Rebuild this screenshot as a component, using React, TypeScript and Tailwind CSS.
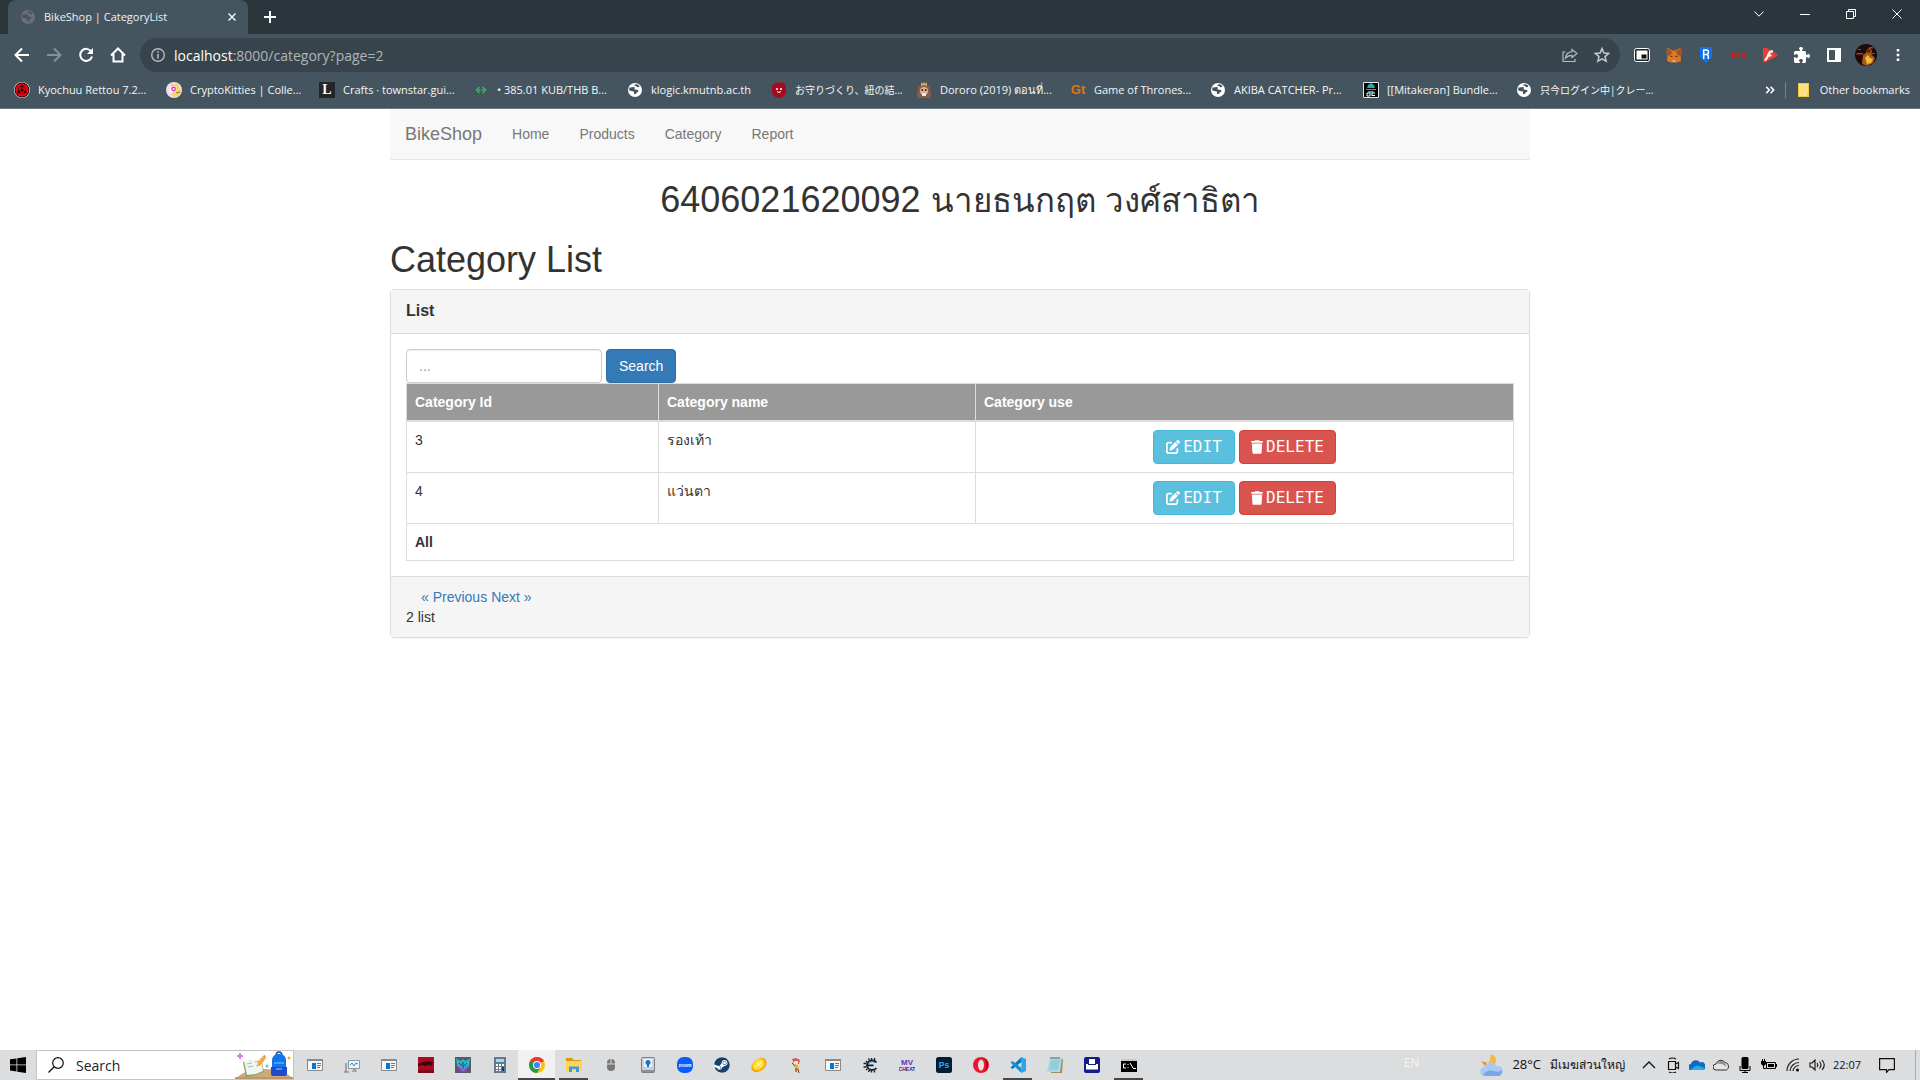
import React from "react";
import { FaPenToSquare, FaTrash, FaSteam, FaPuzzlePiece } from "react-icons/fa6";

type IconProps = { children: React.ReactNode; size?: string; box?: string };

function Svg({ children, size = "size-4", box = "0 0 16 16" }: IconProps) {
  return (
    <svg viewBox={box} className={`${size} block shrink-0`} fill="none" aria-hidden="true">
      {children}
    </svg>
  );
}

/* ---------- bookmark icons ---------- */

function Globe({ dark = false }: { dark?: boolean }) {
  const disc = dark ? "#6b6f73" : "#ffffff";
  const land = dark ? "#45555f" : "#43545e";
  return (
    <Svg>
      <circle cx="8" cy="8" r="7" fill={disc} />
      <path
        d="M2.600 5.200C3.800 6.400 6 4.500 7.500 5.200c1 .6-.6 1.600.4 2.200 1 .5 3-.2 3.500 1.200.4 1.400-1.600 1.400-2.200 2.600-.6 1-1.700 1.500-2.200.6-.4-.8.6-1.600-.3-2.200C5.500 8.800 3 9.600 2.100 8zM8.500 2.300c-.8.800-1.500.6-1.200 1.300.4.7 1.600.2 2.200.8.5.6 1.100.9 2.100.7l1-.9c-1-1.300-2.500-1.900-4.100-1.900z"
        fill={land}
      />
    </Svg>
  );
}

const Sharingan = () => (
  <Svg>
    <circle cx="8" cy="8" r="8" fill="#e9e2e2" />
    <circle cx="8" cy="8" r="7.400" fill="#160000" />
    <circle cx="8" cy="8" r="6.600" fill="#f0040f" />
    <circle cx="8" cy="8" r="3.800" stroke="#7a0000" />
    <circle cx="8" cy="8" r="1.700" fill="#160000" />
    <circle cx="8" cy="4.200" r="1.400" fill="#160000" />
    <circle cx="4.700" cy="10" r="1.400" fill="#160000" />
    <circle cx="11.300" cy="10" r="1.400" fill="#160000" />
  </Svg>
);
const Kitty = () => (
  <Svg>
    <circle cx="8" cy="8" r="8" fill="#f3dcf3" />
    <path d="M5 1l3 1.500L12 1l1.500 5 2.500 2-2 5-5 2.500-3-2-2-5z" fill="#f4d674" />
    <path d="M4 5l5-1 1 4-4 3-3-2z" fill="#fff" />
    <circle cx="7.500" cy="7" r="2.400" fill="#e936c9" />
    <circle cx="7.500" cy="7" r="1" fill="#fff" />
    <path d="M10 11l4-1" stroke="#8f6d28" />
  </Svg>
);
const LetterL = () => (
  <span className="flex size-4 shrink-0 items-center justify-center bg-[#22252a] font-['Liberation_Serif',serif] text-[14px] leading-4 font-bold text-white">
    L
  </span>
);
const Bitkub = () => (
  <Svg>
    <path d="M6.500 5L3.500 8l3 3M6.500 7v2M9.500 5l3 3-3 3M9.500 7v2" stroke="#3fb567" strokeWidth="1.500" />
  </Svg>
);
const Mask = () => (
  <Svg>
    <path d="M1 3l3-1 1-2 3 1 4-1 1 2 2 1v6c0 4-3 7-7 7s-7-3-7-7z" fill="#a50a1d" />
    <circle cx="6" cy="7" r="1.100" fill="#fff" />
    <circle cx="10" cy="7" r="1.100" fill="#fff" />
    <path d="M6 9.500q2 2 4 0" stroke="#fff" />
  </Svg>
);
const Bear = () => (
  <Svg>
    <path d="M5 0l1.500 2L8 0l1.500 2L11 0v4H5z" fill="#d9b26a" />
    <path d="M2 4h3l3-1 3 1h3v4l1 4-1 4H2l-1-4 1-4z" fill="#8a5a44" />
    <circle cx="8" cy="9" r="4" fill="#d8b39a" />
    <circle cx="6.300" cy="8" r=".9" fill="#2c1a12" />
    <circle cx="9.700" cy="8" r=".9" fill="#2c1a12" />
    <path d="M6 11h4v3H6z" fill="#f3e6db" />
  </Svg>
);
const Gt = () => (
  <span className="flex size-4 shrink-0 items-center justify-center font-['Liberation_Sans',sans-serif] text-[13px] leading-4 font-bold text-[#e8710a]">
    Gt
  </span>
);
const Pirate = () => (
  <Svg>
    <path d="M0 0h16v16H0z" fill="#050505" />
    <path d="M.5.500h15v15H.500z" stroke="#dfe7e8" />
    <path d="M5 3l3-2 3 2 1 3H4zM3 7h10v1H3zM5 9h6l-1 2H6z" fill="#2ea7b3" />
    <path d="M4 11h3v3H4zM9 11h3M9 13.500h3M9 11v3" stroke="#fff" />
  </Svg>
);
const Folder = () => (
  <Svg>
    <path d="M2 1h11v10l-1 4H2z" fill="#ffe082" />
    <path d="M2.500 1.500h10v9M2.500 1.500v13H11" stroke="#efc83d" />
    <path d="M11 11h2v4h-2z" fill="#f5cf4a" />
  </Svg>
);

const bookmarks = [
  { label: "Kyochuu Rettou 7.2...", icon: <Sharingan />, width: "w-[152px]" },
  { label: "CryptoKitties | Colle...", icon: <Kitty />, width: "w-[153px]" },
  { label: "Crafts · townstar.gui...", icon: <LetterL />, width: "w-[154px]" },
  { label: "• 385.01 KUB/THB B...", icon: <Bitkub />, width: "w-[154px]" },
  { label: "klogic.kmutnb.ac.th", icon: <Globe />, width: "w-[144px]" },
  { label: "お守りづくり、紐の結...", icon: <Mask />, width: "w-[145px] text-[10px]" },
  { label: "Dororo (2019) ตอนที่...", icon: <Bear />, width: "w-[154px]" },
  { label: "Game of Thrones...", icon: <Gt />, width: "w-[140px]" },
  { label: "AKIBA CATCHER- Pr...", icon: <Globe />, width: "w-[153px]" },
  { label: "[[Mitakeran] Bundle...", icon: <Pirate />, width: "w-[153px]" },
  { label: "只今ログイン中|クレー...", icon: <Globe />, width: "w-[153px] text-[10px]" },
];

/* ---------- browser window ---------- */

const windowControls = [
  { name: "Search tabs", d: "M3.500 5.500L8 10.200l4.500-4.700" },
  { name: "Minimize", d: "M3 8.500h10" },
  { name: "Restore", d: "M3.500 5.500h7v7h-7zM5.500 5.500v-2h7v7h-2" },
  { name: "Close", d: "M3.500 3.500l9 9M12.500 3.500l-9 9" },
];

function TabStrip() {
  return (
    <div className="flex h-[34px] items-center bg-[#2b363c]">
      <div className="ml-2 flex h-full w-60 items-center rounded-t-lg bg-[#45555f] pr-2 pl-3">
        <Globe dark />
        <span className="ml-2 flex-1 text-[11px] whitespace-nowrap text-[#eef1f2]">BikeShop | CategoryList</span>
        <button aria-label="Close tab" className="text-[#eef1f2]">
          <Svg>
            <path d="M4.500 4.500l7 7M11.500 4.500l-7 7" stroke="currentColor" strokeWidth="1.500" />
          </Svg>
        </button>
      </div>
      <button aria-label="New tab" className="ml-3.5 text-white">
        <Svg>
          <path d="M8 2v12M2 8h12" stroke="currentColor" strokeWidth="2" />
        </Svg>
      </button>
      <div className="ml-auto flex h-7 self-start">
        {windowControls.map((c) => (
          <button key={c.name} aria-label={c.name} className="flex w-[46px] items-center justify-center text-white">
            <Svg>
              <path d={c.d} stroke="currentColor" />
            </Svg>
          </button>
        ))}
      </div>
    </div>
  );
}

const navButtons = [
  { name: "Back", tone: "text-white", art: <path d="M15 8H2M8 1.500L1.500 8 8 14.500" stroke="currentColor" strokeWidth="2" /> },
  { name: "Forward", tone: "text-[#84919a]", art: <path d="M1 8h13M8 1.500L14.500 8 8 14.500" stroke="currentColor" strokeWidth="2" /> },
  {
    name: "Reload",
    tone: "text-white",
    art: (
      <>
        <path d="M13.200 4.500A6 6 0 1 0 14 9.500" stroke="currentColor" strokeWidth="2" />
        <path d="M15 1v6H9z" fill="currentColor" />
      </>
    ),
  },
  { name: "Home", tone: "text-white", art: <path d="M1 8.500L8 1.500l7 7M3.500 7v7.500h9V7" stroke="currentColor" strokeWidth="2" /> },
];

const extensions = [
  {
    name: "Picture in picture",
    art: (
      <>
        <rect x=".5" y="1.500" width="15" height="13" rx="2" fill="#1d2226" stroke="#fff" strokeWidth="1" />
        <path d="M2.500 3.500h11v9h-11z" fill="#fff" />
        <path d="M7.500 7.500h5v4h-5z" fill="#111" />
      </>
    ),
  },
  {
    name: "MetaMask",
    art: (
      <>
        <path d="M1 .500l5.500 3h3l5.500-3 .5 5-.8 4.500.3 4-3.800 1.500H4.800L1 14l.4-4-.9-4.500z" fill="#e2761b" />
        <path d="M1 1l5 3.500L4.500 8 1 9zM15 1l-5 3.500L11.500 8 15 9z" fill="#a65321" />
        <path d="M5 8.500l2 1.500H4.500zM11 8.500L9 10h2.500z" fill="#233447" />
        <path d="M6 13h4l-.5 2h-3z" fill="#c0ad9e" />
      </>
    ),
  },
  {
    name: "Ronin",
    art: (
      <>
        <path d="M2 1.500Q2 0 3.500 0h9Q14 0 14 1.500v9L8 16l-6-5.500z" fill="#1273ea" />
        <path d="M5.700 12V3h3.600l1 1v2.500l-1 1H5.700M9 7.500l1.300 1.500V12" stroke="#fff" strokeWidth="1.500" />
      </>
    ),
  },
  {
    name: "STR",
    art: <path d="M5 6.500H1.500V8H4.500V10H1M6 6.500h4M8 6v4.500M11.500 10.500v-4h3V8.500h-3M13.500 8.500l1.500 2" stroke="#e8170c" strokeWidth="1.400" />,
  },
  {
    name: "Flash player",
    art: (
      <>
        <path d="M2 .500Q1 .500 1 2v12q0 2 2 1.500L15 9q1-.8 0-2L5 1z" fill="#ef3b33" />
        <path d="M11 4.500Q7.500 4 6.500 7.500T3 13.500M5.500 8.500h4" stroke="#fff" strokeWidth="2.200" />
      </>
    ),
  },
];

function Toolbar() {
  return (
    <div className="flex h-[38px] items-center pt-1 pr-3.5 pl-3.5">
      <div className="flex gap-4">
        {navButtons.map((b) => (
          <button key={b.name} aria-label={b.name} className={b.tone}>
            <Svg>{b.art}</Svg>
          </button>
        ))}
      </div>
      <div className="ml-3.5 flex h-[34px] flex-1 items-center rounded-full bg-[#38444b] px-2.5">
        <Svg>
          <circle cx="8" cy="8" r="6.300" stroke="#b4bbc0" strokeWidth="1.400" />
          <path d="M8 7v4.500M8 4.200v1.600" stroke="#b4bbc0" strokeWidth="1.600" />
        </Svg>
        <a href="#" className="ml-2 flex-1 text-[14px] text-[#aeb6ba]">
          <span className="text-white">localhost</span>:8000/category?page=2
        </a>
        <button aria-label="Share" className="mr-4 text-[#b4bbc0]">
          <Svg>
            <path d="M3.500 5H1v9.500h12V12M10 2.500l5 4-5 4V8.300c-3 0-5 .9-6.500 2.800C4 7.500 6.500 5 10 4.700z" stroke="currentColor" strokeWidth="1.200" />
          </Svg>
        </button>
        <button aria-label="Bookmark this page" className="text-[#c3c9cd]">
          <Svg>
            <path d="M8 1.500l1.900 4.500 4.800.4-3.700 3.200 1.200 4.700L8 11.800l-4.200 2.500L5 9.600 1.300 6.400 6.100 6z" stroke="currentColor" strokeWidth="1.500" />
          </Svg>
        </button>
      </div>
      <div className="ml-3.5 flex items-center gap-4">
        {extensions.map((e) => (
          <button key={e.name} aria-label={e.name}>
            <Svg>{e.art}</Svg>
          </button>
        ))}
        <button aria-label="Extensions" className="text-white">
          <FaPuzzlePiece className="size-4" />
        </button>
        <button aria-label="Side panel">
          <Svg>
            <path d="M2 2h12v12H2z" stroke="#fff" strokeWidth="2" />
            <path d="M9 1h6v14H9z" fill="#fff" />
          </Svg>
        </button>
        <button aria-label="Profile" className="-mx-[3px]">
          <Svg size="size-[22px]" box="0 0 22 22">
            <circle cx="11" cy="11" r="11" fill="#1c0b0a" />
            <path d="M2 9h6v1.500H1zM3 5h3v1H3zM14 3h4v1.500h-4zM15 9h5v1h-5z" fill="#d3263d" />
            <path d="M8 11l3-2 1-4 3-1 2 3-1 3 4 4-2 5-6 3-5-2z" fill="#a85c1a" />
            <path d="M10 14l3-3 2 3 3 1-2 4-4 1z" fill="#edbb32" />
            <circle cx="13.500" cy="7" r="2" fill="#5b2413" />
          </Svg>
        </button>
        <button aria-label="Menu">
          <Svg>
            <path d="M6.700 2h2.600v2.600H6.700zM6.700 6.700h2.600v2.600H6.700zM6.700 11.400h2.600V14H6.700z" fill="#fff" />
          </Svg>
        </button>
      </div>
    </div>
  );
}

function BookmarkBar() {
  return (
    <div className="flex h-9 items-center pr-2.5 pl-3.5 text-[11px] text-[#f4f6f7]">
      <nav aria-label="Bookmarks" className="flex min-w-0 flex-1 overflow-hidden">
        {bookmarks.map((b) => (
          <a key={b.label} href="#" className={`flex shrink-0 items-center gap-2 whitespace-nowrap ${b.width}`}>
            {b.icon}
            {b.label}
          </a>
        ))}
      </nav>
      <button aria-label="More bookmarks" className="mr-2.5">
        <Svg size="size-2.5">
          <path d="M2 3l5 5-5 5M9 3l5 5-5 5" stroke="#fff" strokeWidth="2.400" />
        </Svg>
      </button>
      <div className="h-4 w-px bg-[#74838c]" />
      <button className="ml-2.5 flex items-center gap-2 whitespace-nowrap">
        <Folder />
        Other bookmarks
      </button>
    </div>
  );
}

/* ---------- page ---------- */

const rows = [
  { id: 3, name: "รองเท้า" },
  { id: 4, name: "แว่นตา" },
];

const cell = "border border-[#ddd] p-2 align-top";

function CategoryPage() {
  return (
    <main className="flex-1 bg-white font-['Liberation_Sans','Open_Sans','Noto_Sans_CJK_JP',sans-serif] text-[14px] leading-5 text-[#333]">
      <div className="mx-auto max-w-[1140px]">
        <nav className="flex h-[51px] items-center border-b border-[#e7e7e7] bg-[#f8f8f8] text-[#777]">
          <a href="#" className="px-[15px] text-[18px]">BikeShop</a>
          <a href="#" className="px-[15px]">Home</a>
          <a href="#" className="px-[15px]">Products</a>
          <a href="#" className="px-[15px]">Category</a>
          <a href="#" className="px-[15px]">Report</a>
        </nav>
        <h1 className="mt-5 text-center text-[36px] leading-10">
          6406021620092 <span className="text-[33px] leading-none">นายธนกฤต วงศ์สาธิตา</span>
        </h1>
        <h1 className="mt-5 mb-[9px] text-[36px] leading-10">Category List</h1>
        <section className="rounded-[4px] border border-[#ddd] shadow-[0_1px_1px_rgba(0,0,0,0.05)]">
          <div className="border-b border-[#ddd] bg-[#f5f5f5] px-[15px] pt-[11px] pb-3">
            <h2 className="text-[16px] leading-5 font-bold">List</h2>
          </div>
          <div className="p-[15px]">
            <form className="flex gap-1" onSubmit={(e) => e.preventDefault()}>
              <input
                type="text"
                aria-label="Search categories"
                placeholder="..."
                className="h-[34px] w-[196px] rounded-[4px] border border-[#ccc] px-3 shadow-[inset_0_1px_1px_rgba(0,0,0,0.075)] placeholder:text-[#999]"
              />
              <button className="h-[34px] rounded-[4px] border border-[#2e6da4] bg-[#337ab7] px-3 text-white">Search</button>
            </form>
            <table className="w-full table-fixed border-collapse border border-[#ddd]">
              <colgroup>
                <col className="w-[252px]" />
                <col className="w-[317px]" />
                <col />
              </colgroup>
              <thead>
                <tr className="bg-[#999] text-left text-white">
                  <th className="border border-b-2 border-[#ddd] p-2">Category Id</th>
                  <th className="border border-b-2 border-[#ddd] p-2">Category name</th>
                  <th className="border border-b-2 border-[#ddd] p-2">Category use</th>
                </tr>
              </thead>
              <tbody>
                {rows.map((r) => (
                  <tr key={r.id}>
                    <td className={cell}>{r.id}</td>
                    <td className={cell}>{r.name}</td>
                    <td className={cell}>
                      <div className="flex justify-center gap-1 font-['DejaVu_Sans_Mono',monospace] text-[16px] text-white">
                        <button className="flex h-[34px] w-[82px] items-center justify-center gap-[3px] rounded-[4px] border border-[#46b8da] bg-[#5bc0de]">
                          <FaPenToSquare className="size-3.5 shrink-0" />
                          EDIT
                        </button>
                        <button className="flex h-[34px] w-[97px] items-center justify-center gap-[3px] rounded-[4px] border border-[#d43f3a] bg-[#d9534f]">
                          <FaTrash className="h-3.5 w-3 shrink-0" />
                          DELETE
                        </button>
                      </div>
                    </td>
                  </tr>
                ))}
              </tbody>
              <tfoot>
                <tr>
                  <th colSpan={3} className="border border-[#ddd] p-2 text-left">All</th>
                </tr>
              </tfoot>
            </table>
          </div>
          <div className="border-t border-[#ddd] bg-[#f5f5f5] px-[15px] py-2.5">
            <nav aria-label="Pages" className="flex gap-1 pl-[15px] text-[#337ab7]">
              <a href="#">« Previous</a>
              <a href="#">Next »</a>
            </nav>
            <p>2 list</p>
          </div>
        </section>
      </div>
    </main>
  );
}

/* ---------- taskbar ---------- */

const newsWindow = (
  <>
    <path d="M.5 2.500h15v11H.500z" fill="#f7f7f7" stroke="#8a8a8a" />
    <path d="M0 2h16v2H0z" fill="#8a8a8a" />
    <path d="M5 6h4v6H5z" fill="#0078d7" />
    <path d="M10 6.500h4M10 8.500h4M10 10.500h3" stroke="#777" />
  </>
);

const apps: { name: string; art: React.ReactNode; state?: "active" | "open" }[] = [
  { name: "Media window", art: newsWindow },
  {
    name: "System monitor",
    art: (
      <>
        <path d="M4.500 3.500h11v8h-11z" fill="#e9f6fb" stroke="#8d979c" />
        <path d="M6 8l2-2 2 3 2-3 2 1" stroke="#2d8fc4" />
        <path d="M9 12h3l1 3H8zM1 6h2v9H1z" fill="#9da5a8" />
        <path d="M0 15h5" stroke="#777" />
      </>
    ),
  },
  { name: "Media window 2", art: newsWindow },
  {
    name: "Red game",
    art: (
      <>
        <path d="M0 0h16v16H0z" fill="#b3061f" />
        <path d="M0 7l5-2 7-1 4 2-3 1 2 2-5-1-3 1-2-1-5 1z" fill="#35070f" />
        <path d="M0 13h16v3H0z" fill="#7c0a1b" />
      </>
    ),
  },
  {
    name: "Predator",
    art: (
      <>
        <path d="M0 0h16v16H0z" fill="#565a63" />
        <path d="M1 1l4 3 3-2 3 2 4-3-1 8-6 6-6-6z" fill="#27b7cf" />
        <path d="M3 8l5 6 5-6-1 5-4 3-4-3z" fill="#b42ee6" />
        <path d="M4 6l3 3M12 6L9 9M8 5v7" stroke="#343848" />
      </>
    ),
  },
  {
    name: "Calculator",
    art: (
      <>
        <path d="M2 0h12v16H2z" fill="#67798a" />
        <path d="M4 2h8v3H4z" fill="#8fe0ff" />
        <path d="M4 7h2v2H4zM7 7h2v2H7zM4 10h2v2H4zM7 10h2v2H7zM4 13h2v1H4zM7 13h2v1H7zM10 7h2v2h-2z" fill="#fff" />
        <path d="M10 10h2v4h-2z" fill="#0b3f80" />
      </>
    ),
  },
  {
    name: "Chrome",
    state: "active",
    art: (
      <>
        <circle cx="8" cy="8" r="8" fill="#fbc116" />
        <path d="M8 8L1.070 4A8 8 0 0 1 14.930 4z" fill="#e33b2e" />
        <path d="M1.070 4A8 8 0 0 0 8 16l3.500-6L8 8z" fill="#279847" />
        <circle cx="8" cy="8" r="4" fill="#fff" />
        <circle cx="8" cy="8" r="3.100" fill="#4285f4" />
      </>
    ),
  },
  {
    name: "File Explorer",
    state: "open",
    art: (
      <>
        <path d="M0 1h6l1.500 2H15v3H0z" fill="#d79a13" />
        <path d="M0 4h16v10H0z" fill="#ffd45e" />
        <path d="M3 15V9.500h10V15h-3v-3H6v3z" fill="#3b9be0" />
      </>
    ),
  },
  {
    name: "Mouse",
    art: (
      <>
        <rect x="4" y="2" width="8" height="12" rx="4" fill="#777" />
        <path d="M4 7h8M8 2v5" stroke="#dadada" />
      </>
    ),
  },
  {
    name: "Disk tool",
    art: (
      <>
        <rect x="1.500" y=".5" width="13" height="15" rx="1" fill="#ccd0d4" stroke="#7c8288" />
        <path d="M4 2h8v8H4z" fill="#eef4f8" />
        <circle cx="8" cy="5.500" r="2.500" fill="#1672c9" />
        <path d="M7 7h2v3H7z" fill="#1672c9" />
        <path d="M2 13h12v2H2z" fill="#8b9198" />
      </>
    ),
  },
  {
    name: "Zoom",
    art: (
      <>
        <rect width="16" height="16" rx="6.500" fill="#0b5cff" />
        <text x="8" y="9.700" textAnchor="middle" fontSize="5" fontWeight="700" fill="#fff">zoom</text>
      </>
    ),
  },
  {
    name: "Steam",
    art: (
      <>
        <circle cx="8" cy="8" r="8" fill="#fff" />
        <FaSteam size={16} color="#14406b" />
      </>
    ),
  },
  {
    name: "Lemon",
    art: (
      <>
        <ellipse cx="8" cy="8" rx="8.500" ry="6" transform="rotate(-40 8 8)" fill="#f8a900" />
        <ellipse cx="7.500" cy="7.500" rx="6.500" ry="4.800" transform="rotate(-40 7.500 7.500)" fill="#ffdc33" />
        <path d="M4 10l7-5M6 5l4 5M9 4l2 4" stroke="#fff9b8" />
      </>
    ),
  },
  {
    name: "Ragnarok",
    art: (
      <>
        <path d="M4 2l4-1 4 2-1 4H6z" fill="#d9556a" />
        <path d="M6 4h4v3H6z" fill="#f9dfc5" />
        <path d="M6 7l4 1 1 4-3 3-1-4z" fill="#e8b22c" />
        <path d="M4 6l3 3M10 12l1 4M8 11v4" stroke="#6f3b35" />
      </>
    ),
  },
  { name: "Media window 3", art: newsWindow },
  {
    name: "Cheat Engine",
    art: (
      <>
        <path d="M14.500 5.500Q13 3.500 10 3.500A4.700 4.700 0 0 0 10 13q3 0 4.500-2M4 8.300h7.500" stroke="#142028" strokeWidth="1.800" />
        <path d="M9.500 1v2M12.500 1v2M6.500 1.500l1 2M4 4l1.500 1.500M1.500 6.500h3M1.500 10h3M4 13l1.500-1.500M6.500 15l1-2M9.500 13.500v2M12.500 13.500v2" stroke="#142028" strokeWidth="1.400" />
        <path d="M13 5.500Q12 4.800 10 4.800T6.500 7.200" stroke="#2d9cc9" strokeWidth=".8" />
      </>
    ),
  },
  {
    name: "MV Cheat",
    art: (
      <>
        <text x="8" y="8" textAnchor="middle" fontSize="8" fontWeight="900" fill="#5f30b5">MV</text>
        <text x="8" y="14" textAnchor="middle" fontSize="5" fontWeight="900" fill="#40227e">CHEAT</text>
      </>
    ),
  },
  {
    name: "Photoshop",
    art: (
      <>
        <rect width="16" height="16" rx="2.500" fill="#001e36" />
        <text x="8" y="11" textAnchor="middle" fontSize="8.500" fontWeight="700" fill="#31a8ff">Ps</text>
      </>
    ),
  },
  {
    name: "Opera",
    art: (
      <>
        <circle cx="8" cy="8" r="8" fill="#f0142f" />
        <path d="M11 1a8 8 0 0 1 0 14c3-3 3-11 0-14z" fill="#a80018" />
        <ellipse cx="8" cy="8" rx="3" ry="5.500" fill="#e3e3e3" />
      </>
    ),
  },
  {
    name: "Visual Studio Code",
    state: "open",
    art: (
      <>
        <path d="M11.500 0L16 2v12l-4.500 2z" fill="#29a5f0" />
        <path d="M11.500 0v5L2.500 12 .5 10.500z" fill="#0879bf" />
        <path d="M11.500 16v-5L2.500 4 .5 5.500z" fill="#168fd6" />
      </>
    ),
  },
  {
    name: "Notepad",
    art: (
      <>
        <path d="M4 2h12l-1 14H4z" fill="#a58b58" />
        <path d="M3 1h12l-2 14H0z" fill="#a9dbe4" />
        <path d="M4 4h9M3.500 6h9M3 8h9M2.500 10h9M2 12h9" stroke="#6db1c0" strokeWidth=".7" />
        <path d="M4 0v2M6 0v2M8 0v2M10 0v2M12 0v2" stroke="#576468" />
      </>
    ),
  },
  {
    name: "Printer",
    art: (
      <>
        <rect width="16" height="16" rx="2" fill="#131c8c" />
        <path d="M5 2h6v5h3v6H2V7h3z" fill="#fff" />
        <path d="M4 7.500h8" stroke="#131c8c" />
        <path d="M2 12.500h12" stroke="#8590dd" />
      </>
    ),
  },
  {
    name: "Command Prompt",
    state: "open",
    art: (
      <>
        <path d="M0 2h16v13H0z" fill="#000" />
        <path d="M0 2h16v2H0z" fill="#c5c9cc" />
        <path d="M5 7H2.500v4H5M7 7v1M7 10v1M9 6l3 5M12 11.500h3" stroke="#fff" />
      </>
    ),
  },
];

const tray = [
  { name: "Show hidden icons", art: <path d="M2 11l6-6 6 6" stroke="#111" strokeWidth="1.300" /> },
  {
    name: "Meet now",
    art: <path d="M3.500 4.500h7v8h-7zM10.500 7l3-1.500v6l-3-1.500M4 2q3.500-2 7 0M4 15q3.500 2 7 0" stroke="#111" strokeWidth="1.200" />,
  },
  {
    name: "OneDrive",
    art: (
      <>
        <path d="M2 13a3 3 0 0 1 0-6 5 5 0 0 1 9-1.500A4 4 0 0 1 14 13z" fill="#0f6cbd" />
        <path d="M2 13q0-2 6-4.500L15.500 11q0 2-2 2z" fill="#29a8ea" />
      </>
    ),
  },
  {
    name: "OneDrive personal",
    art: (
      <>
        <path d="M3 13a3 3 0 0 1 0-6 5 5 0 0 1 9-1.500A4 4 0 0 1 13.500 13z" fill="#e4e4e4" stroke="#333" />
        <path d="M4 6.500Q8 2 11.500 6L14 10 9 7z" fill="#8d8d8d" />
      </>
    ),
  },
  {
    name: "Microphone",
    art: (
      <>
        <rect x="4.500" y="0" width="7" height="12" rx="1.500" fill="#000" />
        <path d="M3 9v4.500h10V9M8 13v3M5 15.500h6" stroke="#000" />
      </>
    ),
  },
  {
    name: "Battery",
    art: (
      <>
        <path d="M5.500 5.500h9v6h-9z" stroke="#000" />
        <path d="M7 7h6v3H7zM15 7h1v3h-1zM0 4h5v3L3.500 8.500h-2L0 7z" fill="#000" />
        <path d="M1.500 2v2M3.500 2v2M2.500 8v3.500H5" stroke="#000" />
      </>
    ),
  },
  {
    name: "Wi-Fi",
    art: (
      <>
        <path d="M2 14A12 12 0 0 1 14 2M5 14A9 9 0 0 1 14 5.500M8 14a6 6 0 0 1 6-5.500" stroke="#222" strokeWidth="1.200" />
        <circle cx="12.500" cy="13" r="1.500" fill="#000" />
      </>
    ),
  },
  {
    name: "Volume",
    art: <path d="M1 6h2l3-3v10l-3-3H1zM8 6q1.500 2 0 4M10.500 4.500q3 3.500 0 7M13 3q4.500 5 0 10" stroke="#111" strokeWidth="1.100" />,
  },
];

function Taskbar() {
  return (
    <footer className="flex h-[30px] items-center bg-[#dcdddf] text-[#111]">
      <button aria-label="Start" className="flex w-9 shrink-0 justify-center">
        <Svg>
          <path d="M0 2.300L6.500 1.400v6.100H0zM7.300 1.300L16 0v7.500H7.300zM0 8.300h6.500v6.200L0 13.600zM7.300 8.300H16V16l-8.700-1.200z" fill="#000" />
        </Svg>
      </button>
      <label className="flex h-full w-[258px] shrink-0 items-center border border-[#c4c4c4] bg-white pl-[11px]">
        <Svg>
          <circle cx="10" cy="6" r="5.300" stroke="#111" strokeWidth="1.200" />
          <path d="M6.200 9.800L.5 15.500" stroke="#111" strokeWidth="1.300" />
        </Svg>
        <input type="text" aria-label="Search" placeholder="Search" className="ml-3 w-28 min-w-0 flex-1 text-[14px] placeholder:text-[#222]" />
        <Svg size="h-7 w-[58px]" box="0 0 58 28">
          <path d="M0 28Q10 18 30 18T58 28z" fill="#d2a878" />
          <path d="M0 26h58v2H0z" fill="#c19763" />
          <path d="M8 11l10-2 2 1 6-3 3 14-8 3-10 2z" fill="#7ba672" />
          <path d="M9 10l9-1 3 14-9 1zM18 9l8-2 2 13-7 3z" fill="#f1f6ee" />
          <path d="M12 13l5-1M13 16l5-1M20 11l5-1M21 15l4-1" stroke="#9fb6cf" />
          <path d="M23 11l5-6 3 2-5 7-4 1z" fill="#f4a93c" />
          <path d="M28 5l2-1 1 3z" fill="#ef6a6a" />
          <path d="M5 2v6M2 5h6" stroke="#dd78ee" strokeWidth="2" />
          <circle cx="32" cy="15" r="1.500" fill="#48cde0" />
          <circle cx="54" cy="7" r="1.500" fill="#f8a920" />
          <path d="M41 5q0-4 3-4t3 4" stroke="#134ba4" strokeWidth="1.500" />
          <rect x="37" y="3" width="14" height="22" rx="6" fill="#1474ea" />
          <path d="M36 16h16v7q0 2-2 2H38q-2 0-2-2z" fill="#2349cf" />
          <path d="M39 12h10M41 18h6" stroke="#56b4ff" strokeWidth="1.500" />
        </Svg>
      </label>
      <nav aria-label="Apps" className="ml-0.5 flex h-full font-['Liberation_Sans',sans-serif]">
        {apps.map((a) => (
          <button
            key={a.name}
            aria-label={a.name}
            className={`relative flex w-[37px] items-center justify-center ${a.state === "active" ? "bg-[#f1f1f1]" : ""}`}
          >
            <Svg>{a.art}</Svg>
            {a.state === "active" && <span className="absolute inset-x-0 bottom-0 h-0.5 bg-[#474747]" />}
            {a.state === "open" && <span className="absolute inset-x-1 bottom-0 h-0.5 bg-[#474747]" />}
          </button>
        ))}
      </nav>
      <div className="ml-auto flex h-full items-center">
        <span className="mr-[61px] mb-1 text-[12px] text-[#f6f5ea]">EN</span>
        <button className="flex items-center gap-2 text-[12px] whitespace-nowrap">
          <Svg size="size-6" box="0 0 24 24">
            <path d="M11 1q6 2 5 8l-4 6-8-2q6-1 7-12z" fill="#f5b83c" />
            <path d="M1 8q4 2 6 1l-2 4z" fill="#ee8a20" />
            <path d="M5 23a4.500 4.500 0 0 1-.5-9 6.500 6.500 0 0 1 12-1A5 5 0 0 1 19 23z" fill="#a9c8f5" />
            <path d="M3 22q4-6 10-4t9-1q0 6-4 6H5z" fill="#79a5ea" />
          </Svg>
          <span className="text-[13px]">28°C</span>
          <span className="w-[76px]">มีเมฆส่วนใหญ่</span>
        </button>
        <div className="ml-4 flex gap-2">
          {tray.map((t) => (
            <button key={t.name} aria-label={t.name}>
              <Svg>{t.art}</Svg>
            </button>
          ))}
        </div>
        <time className="ml-2 w-8 text-[11px]">22:07</time>
        <button aria-label="Notifications" className="ml-3.5">
          <Svg>
            <path d="M.600 1.600h14.800v11H10L7.500 15.500V12.600H.600z" stroke="#111" strokeWidth="1.200" />
          </Svg>
        </button>
        <div className="mr-1 ml-5 h-full w-px bg-[#a9aaab]" />
      </div>
    </footer>
  );
}

export default function App() {
  return (
    <div className="flex min-h-screen flex-col bg-white font-['Open_Sans','Noto_Sans_CJK_JP',sans-serif]">
      <header className="border-b border-[#6c7b84] bg-[#45555f]">
        <TabStrip />
        <Toolbar />
        <BookmarkBar />
      </header>
      <CategoryPage />
      <Taskbar />
    </div>
  );
}
